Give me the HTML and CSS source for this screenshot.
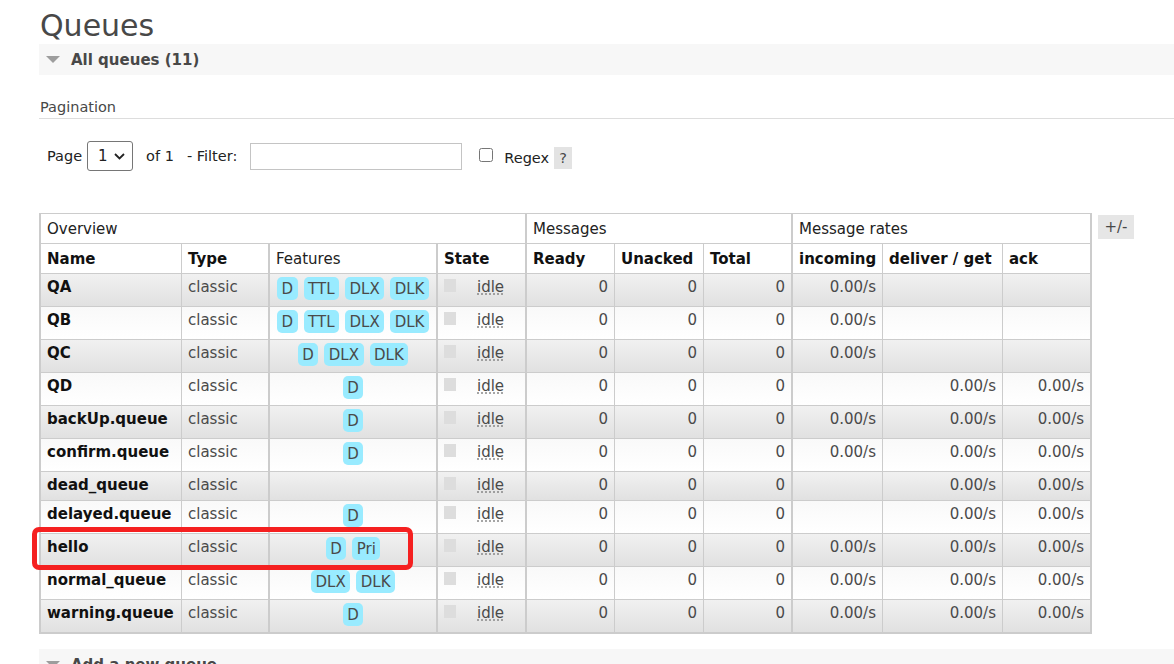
FILE: index.html
```html
<!DOCTYPE html>
<html lang="en">
<head>
<meta charset="utf-8">
<title>Queues</title>
<link rel="stylesheet" href="styles.css">
</head>
<body>
<div class="page">
  <h1 class="title">Queues</h1>
  <div class="section-bar">
    <span class="tri"></span>
    <span class="section-title">All queues (11)</span>
  </div>

  <div class="pagination-head">Pagination</div>

  <div class="controls">
    <span class="ctl-page">Page</span>
    <span class="select-box">
      <select class="page-select"><option>1</option></select>
      <svg class="chev" width="11" height="7" viewBox="0 0 11 7"><path d="M1 1 L5.5 5.5 L10 1" fill="none" stroke="#222" stroke-width="1.8"/></svg>
    </span>
    <span class="ctl-of">of 1</span>
    <span class="ctl-filter">- Filter:</span>
    <input class="filter-input" type="text">
    <input class="regex-check" type="checkbox">
    <span class="ctl-regex">Regex</span>
    <span class="help">?</span>
  </div>

  <div class="table-row">
    <div class="table-wrap">
      <table class="list">
        <colgroup>
          <col class="w-name"><col class="w-type"><col class="w-feat"><col class="w-state">
          <col class="w-ready"><col class="w-unacked"><col class="w-total">
          <col class="w-in"><col class="w-del"><col class="w-ack">
        </colgroup>
        <thead>
          <tr class="group-row">
            <th colspan="4" class="thick">Overview</th>
            <th colspan="3" class="thick">Messages</th>
            <th colspan="3" class="thick">Message rates</th>
          </tr>
          <tr class="col-row">
            <th>Name</th>
            <th class="thick">Type</th>
            <th class="thick plain">Features</th>
            <th class="thick">State</th>
            <th>Ready</th>
            <th>Unacked</th>
            <th class="thick">Total</th>
            <th>incoming</th>
            <th>deliver / get</th>
            <th class="thick">ack</th>
          </tr>
        </thead>
        <tbody>
          <tr class="alt1">
            <td class="name">QA</td><td class="thick">classic</td>
            <td class="thick feat"><div class="feats"><span class="badge">D</span><span class="badge">TTL</span><span class="badge">DLX</span><span class="badge">DLK</span></div></td>
            <td class="thick"><span class="state"><i class="sq"></i><abbr title="idle">idle</abbr></span></td>
            <td class="r">0</td><td class="r">0</td><td class="r thick">0</td>
            <td class="r">0.00/s</td><td class="r"></td><td class="r thick"></td>
          </tr>
          <tr class="alt2">
            <td class="name">QB</td><td class="thick">classic</td>
            <td class="thick feat"><div class="feats"><span class="badge">D</span><span class="badge">TTL</span><span class="badge">DLX</span><span class="badge">DLK</span></div></td>
            <td class="thick"><span class="state"><i class="sq"></i><abbr title="idle">idle</abbr></span></td>
            <td class="r">0</td><td class="r">0</td><td class="r thick">0</td>
            <td class="r">0.00/s</td><td class="r"></td><td class="r thick"></td>
          </tr>
          <tr class="alt1">
            <td class="name">QC</td><td class="thick">classic</td>
            <td class="thick feat"><div class="feats"><span class="badge">D</span><span class="badge">DLX</span><span class="badge">DLK</span></div></td>
            <td class="thick"><span class="state"><i class="sq"></i><abbr title="idle">idle</abbr></span></td>
            <td class="r">0</td><td class="r">0</td><td class="r thick">0</td>
            <td class="r">0.00/s</td><td class="r"></td><td class="r thick"></td>
          </tr>
          <tr class="alt2">
            <td class="name">QD</td><td class="thick">classic</td>
            <td class="thick feat"><div class="feats"><span class="badge">D</span></div></td>
            <td class="thick"><span class="state"><i class="sq"></i><abbr title="idle">idle</abbr></span></td>
            <td class="r">0</td><td class="r">0</td><td class="r thick">0</td>
            <td class="r"></td><td class="r">0.00/s</td><td class="r thick">0.00/s</td>
          </tr>
          <tr class="alt1">
            <td class="name">backUp.queue</td><td class="thick">classic</td>
            <td class="thick feat"><div class="feats"><span class="badge">D</span></div></td>
            <td class="thick"><span class="state"><i class="sq"></i><abbr title="idle">idle</abbr></span></td>
            <td class="r">0</td><td class="r">0</td><td class="r thick">0</td>
            <td class="r">0.00/s</td><td class="r">0.00/s</td><td class="r thick">0.00/s</td>
          </tr>
          <tr class="alt2">
            <td class="name">confirm.queue</td><td class="thick">classic</td>
            <td class="thick feat"><div class="feats"><span class="badge">D</span></div></td>
            <td class="thick"><span class="state"><i class="sq"></i><abbr title="idle">idle</abbr></span></td>
            <td class="r">0</td><td class="r">0</td><td class="r thick">0</td>
            <td class="r">0.00/s</td><td class="r">0.00/s</td><td class="r thick">0.00/s</td>
          </tr>
          <tr class="alt1">
            <td class="name">dead_queue</td><td class="thick">classic</td>
            <td class="thick feat"></td>
            <td class="thick"><span class="state"><i class="sq"></i><abbr title="idle">idle</abbr></span></td>
            <td class="r">0</td><td class="r">0</td><td class="r thick">0</td>
            <td class="r"></td><td class="r">0.00/s</td><td class="r thick">0.00/s</td>
          </tr>
          <tr class="alt2">
            <td class="name">delayed.queue</td><td class="thick">classic</td>
            <td class="thick feat"><div class="feats"><span class="badge">D</span></div></td>
            <td class="thick"><span class="state"><i class="sq"></i><abbr title="idle">idle</abbr></span></td>
            <td class="r">0</td><td class="r">0</td><td class="r thick">0</td>
            <td class="r"></td><td class="r">0.00/s</td><td class="r thick">0.00/s</td>
          </tr>
          <tr class="alt1">
            <td class="name">hello</td><td class="thick">classic</td>
            <td class="thick feat"><div class="feats"><span class="badge">D</span><span class="badge">Pri</span></div></td>
            <td class="thick"><span class="state"><i class="sq"></i><abbr title="idle">idle</abbr></span></td>
            <td class="r">0</td><td class="r">0</td><td class="r thick">0</td>
            <td class="r">0.00/s</td><td class="r">0.00/s</td><td class="r thick">0.00/s</td>
          </tr>
          <tr class="alt2">
            <td class="name">normal_queue</td><td class="thick">classic</td>
            <td class="thick feat"><div class="feats"><span class="badge">DLX</span><span class="badge">DLK</span></div></td>
            <td class="thick"><span class="state"><i class="sq"></i><abbr title="idle">idle</abbr></span></td>
            <td class="r">0</td><td class="r">0</td><td class="r thick">0</td>
            <td class="r">0.00/s</td><td class="r">0.00/s</td><td class="r thick">0.00/s</td>
          </tr>
          <tr class="alt1">
            <td class="name">warning.queue</td><td class="thick">classic</td>
            <td class="thick feat"><div class="feats"><span class="badge">D</span></div></td>
            <td class="thick"><span class="state"><i class="sq"></i><abbr title="idle">idle</abbr></span></td>
            <td class="r">0</td><td class="r">0</td><td class="r thick">0</td>
            <td class="r">0.00/s</td><td class="r">0.00/s</td><td class="r thick">0.00/s</td>
          </tr>
        </tbody>
      </table>
      <div class="highlight"></div>
    </div>
    <span class="plusminus">+/-</span>
  </div>

  <div class="section-bar bottom-bar">
    <span class="tri"></span>
    <span class="section-title">Add a new queue</span>
  </div>
</div>
</body>
</html>
```
FILE: styles.css
```css
html, body {
  margin: 0;
  padding: 0;
  background: #fff;
}

body {
  font-family: "DejaVu Sans", Verdana, sans-serif;
  font-size: 15px;
  color: #484848;
  overflow: hidden;
}

*, *::before, *::after {
  box-sizing: border-box;
}

.page {
  padding-left: 39px;
}

.title {
  margin: 8px 0 0 1px;
  font-size: 30px;
  line-height: 36px;
  font-weight: normal;
  color: #484848;
}

.section-bar {
  display: flex;
  align-items: center;
  height: 31px;
  background: #f7f7f7;
  padding-left: 7px;
}

.tri {
  width: 0;
  height: 0;
  border-left: 7px solid transparent;
  border-right: 7px solid transparent;
  border-top: 7px solid #9d9d9d;
}

.section-title {
  margin-left: 11px;
  font-weight: bold;
  font-size: 15px;
  color: #484848;
}

.bottom-bar {
  margin-top: 15px;
}

.pagination-head {
  margin-top: 23px;
  font-size: 14.5px;
  line-height: 18px;
  padding-bottom: 2px;
  padding-left: 1px;
  border-bottom: 1px solid #dddddd;
  color: #484848;
}

.controls {
  display: flex;
  align-items: center;
  height: 30px;
  margin-top: 22px;
  padding-left: 8px;
  font-size: 14.5px;
  color: #222;
}

.select-box {
  display: inline-flex;
  align-items: center;
  width: 46px;
  height: 30px;
  margin-left: 5px;
  padding: 0 7px 0 10px;
  border: 1px solid #767676;
  border-radius: 3px;
  background: #fff;
}

.page-select {
  appearance: none;
  -webkit-appearance: none;
  border: 0;
  background: transparent;
  padding: 0;
  margin: 0;
  width: 12px;
  font-family: "DejaVu Sans", Verdana, sans-serif;
  font-size: 15px;
  color: #222;
  outline: none;
}

.chev {
  margin-left: auto;
  display: block;
}

.ctl-of {
  margin-left: 13px;
}

.ctl-filter {
  margin-left: 13px;
}

.filter-input {
  margin: 1px 0 0 13px;
  width: 212px;
  height: 27px;
  border: 1px solid #c4c4c4;
  border-radius: 0;
  padding: 0 4px;
  font-family: "DejaVu Sans", Verdana, sans-serif;
  font-size: 14px;
}

.regex-check {
  margin: 0 0 2px 17px;
  width: 14px;
  height: 14px;
}

.ctl-regex {
  margin-left: 11px;
  margin-top: 4px;
}

.help {
  margin-left: 5px;
  margin-top: 4px;
  width: 18px;
  height: 22px;
  line-height: 22px;
  text-align: center;
  background: #e3e3e3;
  color: #484848;
}

.table-row {
  display: flex;
  align-items: flex-start;
  gap: 6px;
  margin-top: 42px;
}

.table-wrap {
  position: relative;
}

table.list {
  border-collapse: separate;
  border-spacing: 0;
  table-layout: fixed;
  width: 1053px;
  border-left: 2px solid #cccccc;
  border-top: 1px solid #cccccc;
  border-bottom: 1px solid #cccccc;
  font-size: 15px;
  line-height: 18px;
}

col.w-name { width: 141px; }
col.w-type { width: 88px; }
col.w-feat { width: 168px; }
col.w-state { width: 89px; }
col.w-ready { width: 88px; }
col.w-unacked { width: 89px; }
col.w-total { width: 89px; }
col.w-in { width: 90px; }
col.w-del { width: 120px; }
col.w-ack { width: 89px; }

table.list th,
table.list td {
  border-right: 1px solid #cccccc;
  border-bottom: 1px solid #cccccc;
  vertical-align: top;
  text-align: left;
  white-space: nowrap;
}

table.list th {
  padding: 6px 6px 5px;
  background: #fff;
  color: #111;
  font-weight: bold;
}

table.list .group-row th,
table.list th.plain {
  font-weight: normal;
  color: #222;
}

table.list td {
  padding: 4px 6px 6px;
  color: #4a4a4a;
}

table.list .thick {
  border-right-width: 2px;
}

table.list tr.alt1 td {
  background: linear-gradient(#f1f1f1, #e1e1e1);
}

table.list tr.alt2 td {
  background: linear-gradient(#f9f9f9, #ffffff);
}

table.list td.name {
  font-weight: bold;
  color: #111;
}

table.list td.r {
  text-align: right;
}

table.list td.feat {
  padding: 3px 6px 6px;
}

.feats {
  display: flex;
  justify-content: center;
  gap: 6px;
}

.badge {
  display: block;
  background: #99ebff;
  border-radius: 5px;
  padding: 3px 4.5px 2px;
  line-height: 18px;
  color: #4a4a4a;
}

.state {
  display: flex;
  align-items: flex-start;
}

.sq {
  display: block;
  width: 12px;
  height: 13px;
  margin-top: 1px;
  background: #dddddd;
}

.state abbr {
  margin-left: 21px;
  text-decoration: underline dotted #888;
  text-underline-offset: 2px;
  color: #4a4a4a;
}

.highlight {
  position: absolute;
  left: -7px;
  top: 314px;
  width: 381px;
  height: 43px;
  border: 5px solid #f52020;
  border-radius: 7px;
  pointer-events: none;
}

.plusminus {
  margin-top: 2px;
  width: 36px;
  height: 24px;
  line-height: 24px;
  text-align: center;
  background: #e6e6e6;
  color: #484848;
  font-size: 15px;
}
```
